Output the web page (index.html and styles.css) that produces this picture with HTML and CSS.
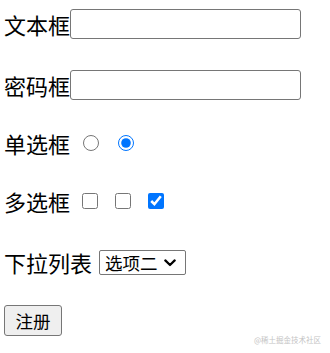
FILE: index.html
```html
<!DOCTYPE html>
<html lang="zh-CN">
<head>
<meta charset="utf-8">
<title>表单</title>
<link rel="stylesheet" href="styles.css">
</head>
<body>
<form class="form">
  <div class="row">
    <span class="label">文本框</span><input class="field" type="text">
  </div>
  <div class="row row-loose">
    <span class="label">密码框</span><input class="field" type="password">
  </div>
  <div class="row">
    <span class="label">单选框</span>
    <span class="choices radios">
      <input class="tick" type="radio" name="r">
      <input class="tick" type="radio" name="r" checked>
    </span>
  </div>
  <div class="row">
    <span class="label">多选框</span>
    <span class="choices checks">
      <input class="tick" type="checkbox">
      <input class="tick" type="checkbox">
      <input class="tick" type="checkbox" checked>
    </span>
  </div>
  <div class="row row-loose">
    <span class="label">下拉列表</span>
    <span class="select-wrap">
      <select class="dropdown">
        <option>选项一</option>
        <option selected>选项二</option>
        <option>选项三</option>
      </select>
      <svg class="chevron" width="12" height="8" viewBox="0 0 12 8" aria-hidden="true">
        <path d="M1.3 1.4 L6 6 L10.7 1.4" fill="none" stroke="#000" stroke-width="2.2" stroke-linecap="round" stroke-linejoin="round"/>
      </svg>
    </span>
  </div>
  <div class="row">
    <button class="submit" type="button">注册</button>
  </div>
</form>
<div class="watermark">@稀土掘金技术社区</div>
</body>
</html>
```
FILE: styles.css
```css
html, body {
  margin: 0;
  background: #ffffff;
}

body {
  font-family: "Noto Sans CJK SC", "Noto Sans", sans-serif;
  color: #000000;
  position: relative;
  width: 330px;
  height: 353px;
  overflow: hidden;
}

.form {
  display: flex;
  flex-direction: column;
  gap: 28px;
  padding: 9px 0 0 4px;
}

.row {
  display: flex;
  align-items: center;
  height: 30px;
}

.row-loose {
  margin-top: 3px;
}

.label {
  font-size: 22px;
  line-height: 30px;
  white-space: nowrap;
}

.field {
  box-sizing: border-box;
  width: 231px;
  height: 30px;
  margin: 0;
  border: 1px solid #767676;
  border-radius: 3px;
  padding: 2px 4px;
  background: #ffffff;
}

.choices {
  display: flex;
  align-items: center;
}

.radios {
  gap: 19px;
  margin-left: 13px;
}

.checks {
  gap: 17px;
  margin-left: 12px;
}

.tick {
  width: 16px;
  height: 16px;
  margin: 0;
}

.select-wrap {
  position: relative;
  display: flex;
  margin-left: 7px;
}

.dropdown {
  -webkit-appearance: none;
  appearance: none;
  box-sizing: border-box;
  width: 87px;
  height: 25px;
  margin: 0;
  font-family: "Noto Sans CJK SC", sans-serif;
  font-size: 17.5px;
  line-height: 23px;
  color: #000000;
  border: 1px solid #767676;
  border-radius: 2px;
  background: #ffffff;
  padding: 0 0 0 5px;
}

.chevron {
  position: absolute;
  left: 65px;
  top: 9px;
  pointer-events: none;
}

.submit {
  box-sizing: border-box;
  width: 58px;
  height: 31px;
  margin: 0;
  padding: 0;
  font-family: "Noto Sans CJK SC", sans-serif;
  font-size: 17.5px;
  color: #000000;
  background: #efefef;
  border: 1px solid #767676;
  border-radius: 3px;
}

.watermark {
  position: absolute;
  right: 9px;
  bottom: 9px;
  font-size: 7.5px;
  line-height: 8px;
  color: #c4c4c4;
  white-space: nowrap;
}
```
